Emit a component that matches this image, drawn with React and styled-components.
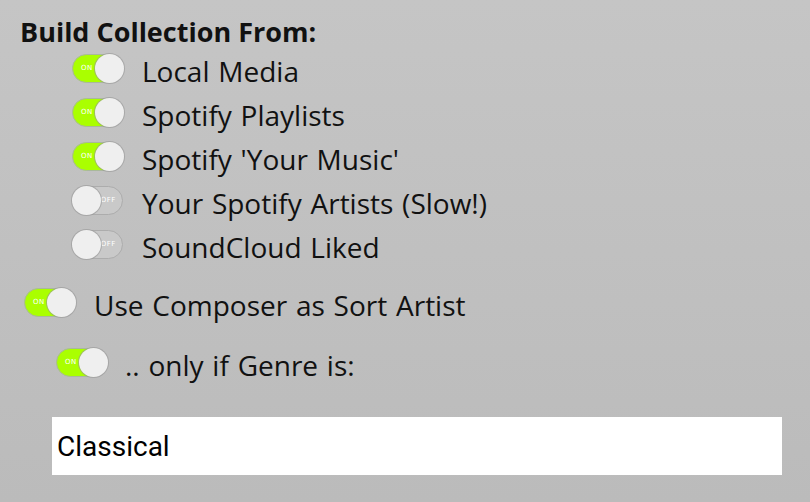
import React, { useState } from "react";
import styled, { createGlobalStyle } from "styled-components";

const GlobalStyle = createGlobalStyle`
  html, body {
    margin: 0;
    padding: 0;
  }
  body {
    width: 810px;
    height: 502px;
    overflow: hidden;
    background: linear-gradient(to bottom, #c5c5c5, #bbbbbb);
    font-family: "Open Sans", "Noto Sans", sans-serif;
    color: #111;
  }
`;

const Page = styled.div`
  padding: 15px 0 0 20px;
`;

const Heading = styled.div`
  font-weight: 700;
  font-size: 27px;
  line-height: 34px;
`;

const SourceList = styled.div`
  display: flex;
  flex-direction: column;
  padding-left: 52px;
`;

const Row = styled.label`
  display: flex;
  align-items: center;
  gap: ${({ gap }) => gap || 19}px;
  height: ${({ h }) => h || 44}px;
  padding-left: ${({ indent }) => indent || 0}px;
  font-size: 28px;
  word-spacing: 1.5px;
`;

const Track = styled.span`
  position: relative;
  flex: none;
  width: 51px;
  height: 29px;
  margin-bottom: 6px;
  box-sizing: border-box;
  border-radius: 15px;
  border: 1px solid ${({ on }) => (on ? "#a9b99a" : "#acacac")};
  background: ${({ on }) => (on ? "#aaff00" : "#c9c9c9")};
  cursor: pointer;
`;

const Knob = styled.span`
  position: absolute;
  top: -1px;
  left: ${({ on }) => (on ? "22px" : "-1px")};
  width: 29px;
  height: 29px;
  border-radius: 50%;
  background: #efefef;
  box-shadow: 0 0 0 1px rgba(150, 150, 150, 0.6);
`;

const StateText = styled.span`
  position: absolute;
  top: 9px;
  ${({ on }) => (on ? "left: 8px;" : "right: 6px;")}
  font-family: "DejaVu Sans", sans-serif;
  font-size: 7px;
  line-height: 9px;
  color: #fff;
  letter-spacing: 0.6px;
`;

const Composer = styled.div`
  margin-top: 11px;
  display: flex;
  flex-direction: column;
`;

const GenreInput = styled.input`
  display: block;
  box-sizing: border-box;
  margin: 17px 0 0 32px;
  width: 730px;
  height: 58px;
  border: none;
  outline: none;
  background: #fff;
  padding: 0 5px;
  font-family: "Roboto", sans-serif;
  font-size: 28px;
  color: #000;
`;

function Toggle({ on, onClick }) {
  return (
    <Track on={on ? 1 : 0} onClick={onClick}>
      <StateText on={on ? 1 : 0}>{on ? "ON" : "OFF"}</StateText>
      <Knob on={on ? 1 : 0} />
    </Track>
  );
}

const sources = [
  ["Local Media", true],
  ["Spotify Playlists", true],
  ["Spotify 'Your Music'", true],
  ["Your Spotify Artists (Slow!)", false],
  ["SoundCloud Liked", false],
];

export default function App() {
  const [flags, setFlags] = useState(sources.map((s) => s[1]));
  const [composer, setComposer] = useState(true);
  const [genreOnly, setGenreOnly] = useState(true);
  const [genre, setGenre] = useState("Classical");

  const flip = (i) => setFlags((f) => f.map((v, j) => (j === i ? !v : v)));

  return (
    <Page>
      <GlobalStyle />
      <Heading>Build Collection From:</Heading>
      <SourceList>
        {sources.map(([name], i) => (
          <Row key={name}>
            <Toggle on={flags[i]} onClick={() => flip(i)} />
            <span>{name}</span>
          </Row>
        ))}
      </SourceList>
      <Composer>
        <Row indent={4} h={50}>
          <Toggle on={composer} onClick={() => setComposer(!composer)} />
          <span>Use Composer as Sort Artist</span>
        </Row>
        <Row indent={36} gap={18} h={70}>
          <Toggle on={genreOnly} onClick={() => setGenreOnly(!genreOnly)} />
          <span>.. only if Genre is:</span>
        </Row>
      </Composer>
      <GenreInput value={genre} onChange={(e) => setGenre(e.target.value)} />
    </Page>
  );
}
